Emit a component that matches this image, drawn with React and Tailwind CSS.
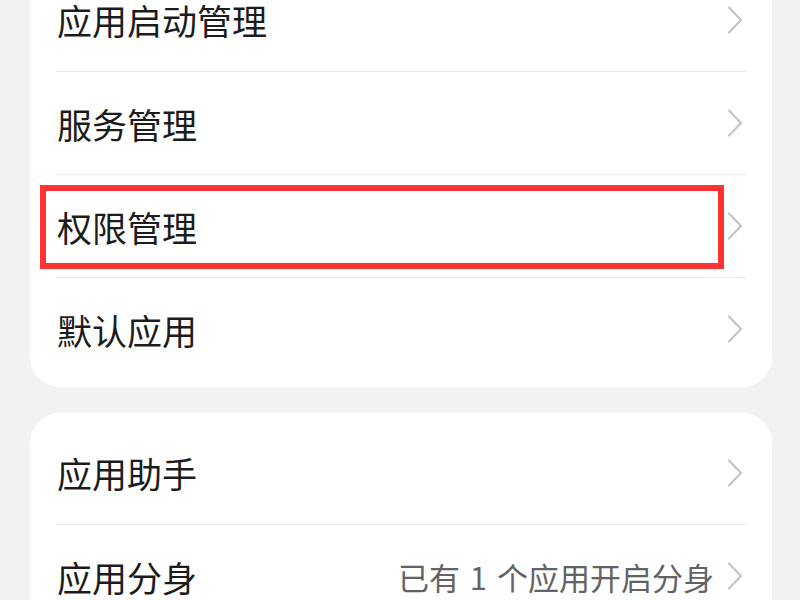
import React from 'react';

const font = { fontFamily: '"Noto Sans CJK SC", "Noto Sans", sans-serif' };

function Chevron() {
    return (
        <svg width="16" height="28" viewBox="0 0 16 28" className="shrink-0">
            <polyline points="2,1.5 14,14 2,26.5" fill="none" stroke="#c4c4c4" strokeWidth="2.2" strokeLinecap="round" strokeLinejoin="round" />
        </svg>
    );
}

function Row({ label, value, first, highlight }) {
    return (
        <div className={`relative h-[103px] mx-[26px] flex items-center ${first ? '' : 'border-t border-[#e8e8e8]'}`}>
            <span className="flex-1 pl-px text-[35px] leading-none text-[#1c1c1c]">{label}</span>
            {value && <span className="mr-[13px] text-[31px] leading-none text-[#636363] [word-spacing:3px]">{value}</span>}
            <span className="mr-[3px] flex items-center"><Chevron /></span>
            {/* red highlight frame drawn over the row */}
            {highlight && (
                <div className="absolute left-[-16px] top-[10px] w-[684px] h-[84px] border-[6px] border-[#ff3333]" />
            )}
        </div>
    );
}

export default function App() {
    const cardOne = ['应用启动管理', '服务管理', '权限管理', '默认应用'];

    return (
        <div className="w-[800px] h-[600px] overflow-hidden bg-[#f1f2f4]" style={font}>
            <div className="mt-[-40px] pl-[30px] pr-[28px] flex flex-col gap-[26px]">
                <div className="bg-white rounded-[30px] pt-[8px] pb-[7px]">
                    {cardOne.map((label, i) => (
                        <Row key={label} label={label} first={i === 0} highlight={label === '权限管理'} />
                    ))}
                </div>
                <div className="bg-white rounded-[30px] pt-[8px] pb-[7px]">
                    <Row label="应用助手" first />
                    <Row label="应用分身" value="已有 1 个应用开启分身" />
                </div>
            </div>
        </div>
    );
}
